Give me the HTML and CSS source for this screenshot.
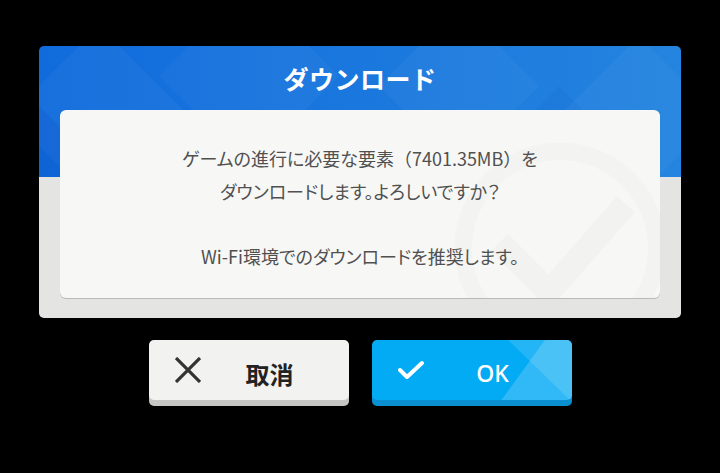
FILE: index.html
```html
<!DOCTYPE html>
<html lang="ja">
<head>
  <meta charset="UTF-8">
  <title>ダウンロード</title>
  <meta name="viewport" content="width=device-width,initial-scale=1">
  <link rel="stylesheet" href="styles.css">
</head>
<body>
  <div class="screen">
    <section class="dialog">
      <svg class="dialog-pattern" viewBox="0 0 642 131" preserveAspectRatio="none">
        <polygon points="60,-20 150,70 60,160 -30,70" fill="rgba(255,255,255,0.035)"/>
        <polygon points="210,-60 300,30 210,120 120,30" fill="rgba(255,255,255,0.03)"/>
        <polygon points="0,60 90,150 0,240 -90,150" fill="rgba(0,40,160,0.1)"/>
        <polygon points="420,-40 500,40 420,120 340,40" fill="rgba(255,255,255,0.03)"/>
        <polygon points="600,-10 680,70 600,150 520,70" fill="rgba(255,255,255,0.035)"/>
        <polygon points="520,40 600,120 520,200 440,120" fill="rgba(0,40,160,0.05)"/>
      </svg>
      <h1 class="dialog-title">ダウンロード</h1>
      <div class="dialog-card">
        <svg class="card-mark" viewBox="0 0 200 200">
          <circle cx="100" cy="100" r="88" fill="none" stroke="rgba(0,0,0,0.015)" stroke-width="16"/>
          <polyline points="45,95 90,140 160,60" fill="none" stroke="rgba(0,0,0,0.02)" stroke-width="22"/>
        </svg>
        <p>ゲームの進行に必要な要素<span class="wide">（</span>7401.35MB<span class="wide">）</span>を<br>ダウンロードします。よろしいですか？</p>
        <p>Wi-Fi環境でのダウンロードを推奨します。</p>
      </div>
    </section>

    <div class="actions">
      <button class="btn btn-cancel">
        <svg class="btn-icon" viewBox="0 0 26 26">
          <path d="M1 1 L25 25 M25 1 L1 25" stroke="#333" stroke-width="3.2" fill="none"/>
        </svg>
        <span class="btn-label">取消</span>
      </button>
      <button class="btn btn-ok">
        <svg class="btn-shine" viewBox="0 0 200 66" preserveAspectRatio="none">
          <polygon points="136,0 200,0 200,62" fill="rgba(255,255,255,0.13)"/>
          <polygon points="173,0 200,0 200,66 125,66" fill="rgba(255,255,255,0.18)"/>
        </svg>
        <svg class="btn-icon" viewBox="0 0 26 20">
          <polyline points="2,10 9,17 24,3" stroke="#fff" stroke-width="4" fill="none" stroke-linecap="round" stroke-linejoin="round"/>
        </svg>
        <span class="btn-label">OK</span>
      </button>
    </div>
  </div>
</body>
</html>
```

FILE: styles.css
```css
:root {
  --blue-dark:   #106bdc;
  --blue-light:  #2484df;
  --panel-grey:  #e4e4e3;
  --card:        #f7f7f5;
  --text:        #505050;
  --ok:          #03aaf4;
  --ok-edge:     #0a8fd0;
  --cancel:      #f2f2f0;
  --cancel-edge: #c6c6c4;
}
html, body {
  margin: 0; padding: 0;
  width: 100%; height: 100%;
  background: #000;
  font-family: "Noto Sans CJK JP", "Noto Sans", sans-serif;
}
.screen { padding-top: 46px; }

.dialog {
  position: relative;
  margin: 0 39px;
  height: 272px;
  padding: 0 21px 20px;
  box-sizing: border-box;
  border-radius: 5px;
  overflow: hidden;
  background:
    linear-gradient(to right, var(--blue-dark), var(--blue-light)) top / 100% 131px no-repeat,
    var(--panel-grey);
}
.dialog-pattern {
  position: absolute; top: 0; left: 0;
  width: 100%; height: 131px;
}
.dialog-title {
  position: relative;
  margin: 0;
  height: 64px;
  line-height: 64px;
  text-align: center;
  color: #fff;
  font-size: 25px;
  font-weight: bold;
  letter-spacing: 0.5px;
}
.dialog-card {
  position: relative;
  height: 188px;
  box-sizing: border-box;
  padding-top: 32px;
  background: var(--card);
  border-radius: 6px;
  box-shadow: 0 1px 0 #b9b9b7;
  overflow: hidden;
  text-align: center;
  color: var(--text);
  font-size: 18px;
  line-height: 32.5px;
  font-feature-settings: "palt";
}
.dialog-card p { position: relative; margin: 0 0 32.5px; }
.dialog-card .wide { font-feature-settings: normal; }
.card-mark {
  position: absolute;
  right: -10px; bottom: -60px;
  width: 220px; height: 220px;
}

.actions {
  display: flex;
  justify-content: center;
  gap: 23px;
  margin-top: 22px;
}
.btn {
  position: relative;
  display: flex;
  align-items: center;
  width: 200px;
  height: 60px;
  padding: 0 10px 0 26px;
  border: none;
  border-radius: 5px;
  overflow: hidden;
  font-family: inherit;
}
.btn-cancel {
  background: var(--cancel);
  box-shadow: 0 6px 0 var(--cancel-edge);
  color: #222;
}
.btn-ok {
  background: var(--ok);
  box-shadow: 0 6px 0 var(--ok-edge);
  color: #fff;
}
.btn-shine {
  position: absolute; top: 0; left: 0;
  width: 100%; height: 66px;
}
.btn-icon { position: relative; width: 26px; height: 26px; flex: none; }
.btn-ok .btn-icon { height: 20px; }
.btn-label {
  position: relative;
  flex: 1;
  text-align: center;
  padding-top: 6px;
  font-size: 24px;
  font-weight: bold;
}
.btn-ok .btn-label {
  font-family: "Noto Sans", sans-serif;
  font-weight: 500;
  font-size: 23px;
}
```
